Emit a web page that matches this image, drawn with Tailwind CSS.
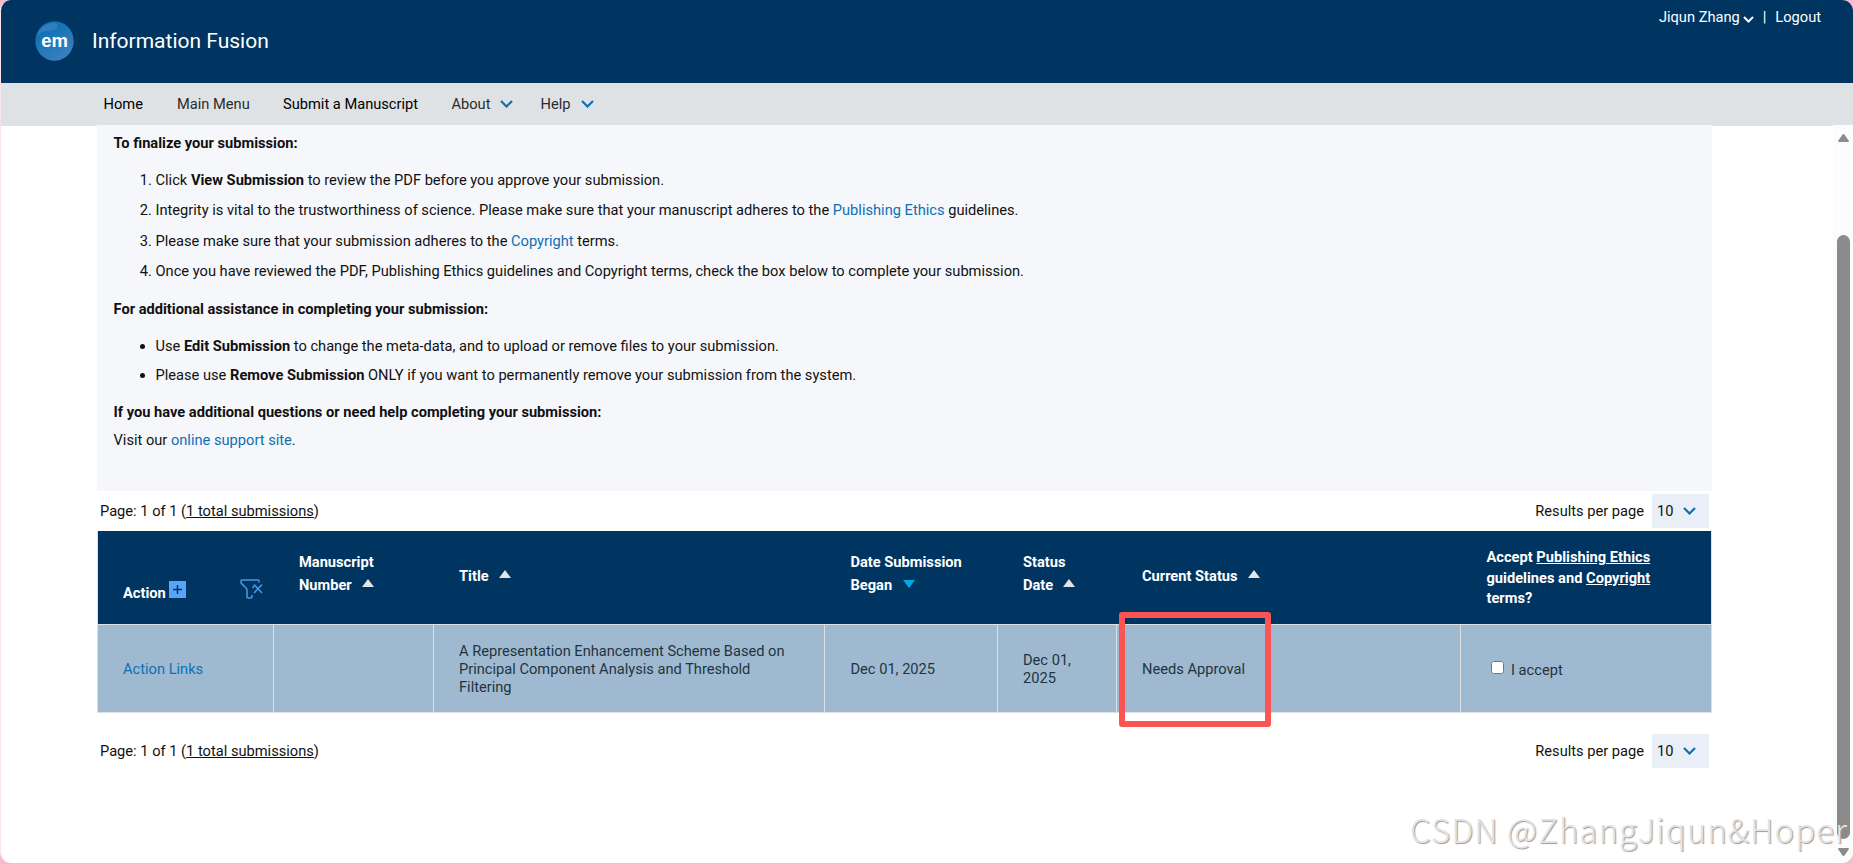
<!DOCTYPE html>
<html lang="en">
<head>
    <meta charset="UTF-8">
    <meta name="viewport" content="width=device-width, initial-scale=1.0">
    <title>Information Fusion - Submissions Waiting for Approval</title>
    <script src="https://cdn.jsdelivr.net/npm/@tailwindcss/browser@4"></script>
</head>
<body class="bg-[#f7bccb] font-[Roboto,sans-serif] text-[14.65px] leading-[18px] text-[#111]">
    <div class="relative flex h-[863px] flex-col overflow-hidden rounded-[11px] border-l border-[#fbe3ea] bg-white">
        <!-- Header -->
        <header class="flex h-[83px] shrink-0 justify-between bg-[#003562] text-white">
            <div class="flex items-center pl-[34px] pb-px">
                <svg class="h-10 w-[39px]" viewBox="0 0 39 40">
                    <defs>
                        <linearGradient id="ball" x1="0" y1="0" x2="0.6" y2="1">
                            <stop offset="0.2" stop-color="#0b70b5"/>
                            <stop offset="1" stop-color="#3a7fbd"/>
                        </linearGradient>
                    </defs>
                    <ellipse cx="19.5" cy="20" rx="19.2" ry="19.8" fill="url(#ball)"/>
                    <path d="M2.500 13C6 5 13 1.500 20 1.500C24 4 23 8 18 9.500C11 10 5 10 2.500 16Z" fill="#2f7fbc"/>
                    <text x="19.500" y="26" text-anchor="middle" font-family="Liberation Sans" font-weight="700" font-size="18.500" fill="#fff">em</text>
                </svg>
                <h1 class="ml-[18px] text-[21px]">Information Fusion</h1>
            </div>
            <div class="flex h-[34px] items-center pr-8">
                <a href="#">Jiqun Zhang</a>
                <svg class="mt-1 ml-[3px] h-[7px] w-[11px]" viewBox="0 0 11 7" fill="none" stroke="#fff" stroke-width="2"><path d="M1 1L5.500 5.500L10 1"/></svg>
                <span class="mx-[9px]">|</span>
                <a href="#">Logout</a>
            </div>
        </header>

        <!-- Navigation -->
        <nav class="flex h-[43px] shrink-0 items-center bg-[#dfe2e5] pb-[2px] pl-[102.500px] text-black">
            <a href="#" class="w-[73.500px]">Home</a>
            <a href="#" class="w-[106px] text-[#2b2b2b]">Main Menu</a>
            <a href="#" class="w-[168.500px]">Submit a Manuscript</a>
            <a href="#" class="flex w-[89px] items-center text-[#2b2b2b]">About
                <svg class="ml-[10px] h-2 w-[13px]" viewBox="0 0 13 8" fill="none" stroke="#0c70b4" stroke-width="2.200"><path d="M1 1L6.500 6.500L12 1"/></svg>
            </a>
            <a href="#" class="flex items-center text-[#2b2b2b]">Help
                <svg class="ml-[10px] h-2 w-[13px]" viewBox="0 0 13 8" fill="none" stroke="#0c70b4" stroke-width="2.200"><path d="M1 1L6.500 6.500L12 1"/></svg>
            </a>
        </nav>

        <div class="-mt-px flex grow">
            <main class="ml-24 w-[1615px]">
                <!-- Instructions -->
                <section class="h-[366px] bg-[#f6f7fb] pt-[9px] pl-[16.500px]">
                    <h2 class="font-bold">To finalize your submission:</h2>
                    <ol class="mt-[19px] list-decimal space-y-[12.400px] pl-[42px]">
                        <li>Click <b>View Submission</b> to review the PDF before you approve your submission.</li>
                        <li>Integrity is vital to the trustworthiness of science. Please make sure that your manuscript adheres to the <a href="#" class="text-[#0c70b4]">Publishing Ethics</a> guidelines.</li>
                        <li>Please make sure that your submission adheres to the <a href="#" class="text-[#0c70b4]">Copyright</a> terms.</li>
                        <li>Once you have reviewed the PDF, Publishing Ethics guidelines and Copyright terms, check the box below to complete your submission.</li>
                    </ol>
                    <h2 class="mt-5 font-bold">For additional assistance in completing your submission:</h2>
                    <ul class="mt-[19px] list-disc space-y-[11px] pl-[42px]">
                        <li>Use <b>Edit Submission</b> to change the meta-data, and to upload or remove files to your submission.</li>
                        <li>Please use <b>Remove Submission</b> ONLY if you want to permanently remove your submission from the system.</li>
                    </ul>
                    <h2 class="mt-[19px] font-bold">If you have additional questions or need help completing your submission:</h2>
                    <p class="mt-[10px]">Visit our <a href="#" class="text-[#0c70b4]">online support site</a>.</p>
                </section>

                <!-- Pager -->
                <div class="flex h-10 items-center justify-between pr-[3px] pl-[3px]">
                    <span>Page: 1 of 1 (<a href="#" class="underline">1 total submissions</a>)</span>
                    <div class="flex items-center">Results per page
                        <span class="ml-2 flex h-[34px] w-[57px] items-center bg-[#eaeff7] pl-[5px]">10
                            <svg class="ml-[10px] h-2 w-[13px]" viewBox="0 0 13 8" fill="none" stroke="#0c70b4" stroke-width="2.200"><path d="M1 1L6.500 6.500L12 1"/></svg>
                        </span>
                    </div>
                </div>

                <!-- Submissions table -->
                <div class="grid grid-cols-[176px_160px_391px_173px_119px_344px_1fr] border-x border-b border-[#dfe0e3]">
                    <div class="flex h-[93px] bg-[#003562] pt-[50px] pl-[25px] font-bold text-white">
                        <span class="mt-[3px]">Action</span>
                        <svg class="ml-[3px] size-[17px]" viewBox="0 0 17 17"><path fill="#56a5f8" d="M0 0H17V17H0Z"/><path stroke="#003562" stroke-width="1.500" d="M8.500 4V13M4 8.500H13"/></svg>
                        <svg class="-mt-[2px] ml-[54px] h-5 w-[23px]" viewBox="0 0 23 20" fill="none" stroke="#4596e8" stroke-width="1.600"><path d="M19 3.500V2Q19 1 18 1H2Q1 1 1 2V3.500Q1 4.500 2 5L6 9Q7 10 7 11V18Q7 19 8 19H10.500Q12 19 12 17.500V16"/><path d="M12.500 9L14 7M14 5.500L22 14M22 5.500L14 14"/></svg>
                    </div>
                    <div class="bg-[#003562] pt-5 pl-[25px] leading-[23px] font-bold text-white">
                        Manuscript<br>Number <svg class="mb-[6px] ml-[6.500px] inline h-2 w-3" viewBox="0 0 12 8"><path fill="#e4e4e4" d="M6 0L12 8H0Z"/></svg>
                    </div>
                    <div class="bg-[#003562] pt-[34px] pl-[25px] leading-[23px] font-bold text-white">
                        Title <svg class="mb-[6px] ml-[7px] inline h-2 w-3" viewBox="0 0 12 8"><path fill="#e4e4e4" d="M6 0L12 8H0Z"/></svg>
                    </div>
                    <div class="bg-[#003562] pt-5 pl-[25.500px] leading-[23px] font-bold text-white">
                        Date Submission<br>Began <svg class="mb-[4px] ml-[7px] inline h-2 w-3" viewBox="0 0 12 8"><path fill="#00a9e6" d="M0 0H12L6 8Z"/></svg>
                    </div>
                    <div class="bg-[#003562] pt-5 pl-[25px] leading-[23px] font-bold text-white">
                        Status<br>Date <svg class="mb-[6px] ml-[6.500px] inline h-2 w-3" viewBox="0 0 12 8"><path fill="#e4e4e4" d="M6 0L12 8H0Z"/></svg>
                    </div>
                    <div class="bg-[#003562] pt-[34px] pl-[25px] leading-[23px] font-bold text-white">
                        Current Status <svg class="mb-[6px] ml-[6.500px] inline h-2 w-3" viewBox="0 0 12 8"><path fill="#e4e4e4" d="M6 0L12 8H0Z"/></svg>
                    </div>
                    <div class="bg-[#003562] pt-[16px] pl-[25.500px] leading-[20.500px] font-bold text-white">
                        Accept <a href="#" class="underline">Publishing Ethics</a><br>guidelines and <a href="#" class="underline">Copyright</a><br>terms?
                    </div>

                    <div class="flex h-[88px] items-center border-t border-r border-[#dfe0e3] bg-[#9fbad0] pl-[25px] text-[#0c70b4]"><a href="#">Action Links</a></div>
                    <div class="border-t border-r border-[#dfe0e3] bg-[#9fbad0]"></div>
                    <div class="flex items-center border-t border-r border-[#dfe0e3] bg-[#9fbad0] pl-[25px] text-[#1f3440]">A Representation Enhancement Scheme Based on<br>Principal Component Analysis and Threshold<br>Filtering</div>
                    <div class="flex items-center border-t border-r border-[#dfe0e3] bg-[#9fbad0] pl-[25.500px] text-[#1f3440]">Dec 01, 2025</div>
                    <div class="flex items-center border-t border-r border-[#dfe0e3] bg-[#9fbad0] pl-[25px] text-[#1f3440]">Dec 01,<br>2025</div>
                    <div class="relative flex items-center border-t border-r border-[#dfe0e3] bg-[#9fbad0] pl-[25px] text-[#1f3440]">Needs Approval
                        <!-- Highlight frame over the status cell -->
                        <div class="absolute -top-[13px] left-[2px] h-[115px] w-[152px] rounded-[3px] border-[6px] border-[#fc5353]"></div>
                    </div>
                    <label class="flex items-center border-t border-[#dfe0e3] bg-[#9fbad0] pl-[30px] text-[#1f3440]">
                        <input type="checkbox" class="mr-[7px] mb-[2px] size-[13px]"><span class="mt-[2px]">I accept</span>
                    </label>
                </div>

                <!-- Bottom pager -->
                <div class="mt-[18px] flex h-10 items-center justify-between pr-[3px] pl-[3px]">
                    <span>Page: 1 of 1 (<a href="#" class="underline">1 total submissions</a>)</span>
                    <div class="flex items-center">Results per page
                        <span class="ml-2 flex h-[34px] w-[57px] items-center bg-[#eaeff7] pl-[5px]">10
                            <svg class="ml-[10px] h-2 w-[13px]" viewBox="0 0 13 8" fill="none" stroke="#0c70b4" stroke-width="2.200"><path d="M1 1L6.500 6.500L12 1"/></svg>
                        </span>
                    </div>
                </div>
            </main>

            <!-- Scrollbar -->
            <div class="ml-auto flex w-5 flex-col items-center bg-[#fcfcfc] pt-[9px] pb-[7px]">
                <svg class="h-2 w-[11px]" viewBox="0 0 11 8"><path fill="#8b8b8b" d="M5.500 0Q6.200 0 6.800 1L11 7Q11 8 10 8H1Q0 8 0 7L4.200 1Q4.800 0 5.500 0Z"/></svg>
                <div class="mt-[93px] h-[604px] w-[13px] rounded-full bg-[#8b8b8b]"></div>
                <svg class="mt-auto h-2 w-[11px] rotate-180" viewBox="0 0 11 8"><path fill="#8b8b8b" d="M5.500 0Q6.200 0 6.800 1L11 7Q11 8 10 8H1Q0 8 0 7L4.200 1Q4.800 0 5.500 0Z"/></svg>
            </div>
        </div>

        <!-- Watermark -->
        <div class="absolute top-[809px] left-[1409px] font-['Noto_Sans_CJK_SC',sans-serif] text-[33px] leading-[40px] font-light tracking-[1.050px] whitespace-nowrap text-[#e4e4e4] [text-shadow:1px_1px_1px_#999]">CSDN @ZhangJiqun&amp;Hoper</div>
    </div>
</body>
</html>
